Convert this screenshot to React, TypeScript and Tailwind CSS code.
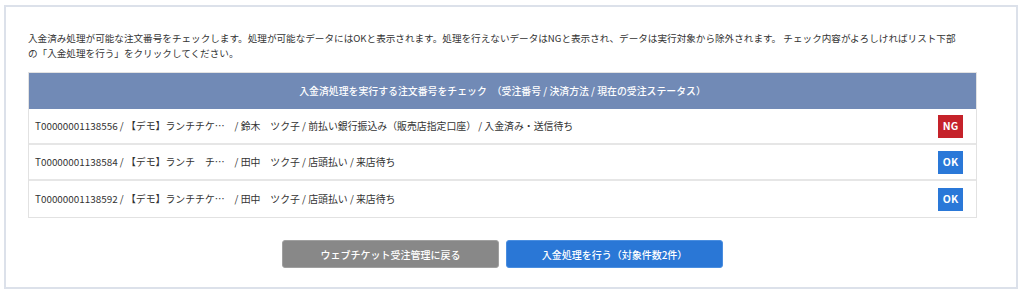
const rows = [
  {
    text: "T00000001138556 / 【デモ】ランチチケ…　/ 鈴木　ツク子 / 前払い銀行振込み（販売店指定口座） / 入金済み・送信待ち",
    ok: false,
  },
  { text: "T00000001138584 / 【デモ】ランチ　チ…　/ 田中　ツク子 / 店頭払い / 来店待ち", ok: true },
  { text: "T00000001138592 / 【デモ】ランチチケ…　/ 田中　ツク子 / 店頭払い / 来店待ち", ok: true },
];

function Badge({ ok }: { ok: boolean }) {
  return (
    <span
      className={`flex h-[23px] w-[25px] items-center justify-center text-[10.5px] font-bold text-white ${
        ok ? "bg-[#2a78d8]" : "bg-[#c5222a]"
      }`}
    >
      {ok ? "OK" : "NG"}
    </span>
  );
}

export default function App() {
  return (
    <div
      className="h-[296px] w-[1024px] bg-white pl-[4px] pt-[5px] text-[#333]"
      style={{ fontFamily: '"Noto Sans CJK JP", "Noto Sans", sans-serif' }}
    >
      <div className="h-[284px] w-[1014px] border-2 border-[#dce1ea] pl-[22px] pt-[24px]">
        <p className="w-[932px] text-[9.6px] leading-[15px]">
          入金済み処理が可能な注文番号をチェックします。処理が可能なデータにはOKと表示されます。処理を行えないデータはNGと表示され、データは実行対象から除外されます。
          チェック内容がよろしければリスト下部の「入金処理を行う」をクリックしてください。
        </p>

        <div className="mt-[11px] w-[949px] border border-[#e2e2e2]">
          <div className="flex h-[36px] items-center justify-center bg-[#718ab6] text-[9.9px] font-medium text-white">
            入金済処理を実行する注文番号をチェック　（受注番号 / 決済方法 / 現在の受注ステータス）
          </div>
          {rows.map((r, i) => (
            <div
              key={r.text}
              className={`flex h-[36px] items-center justify-between pl-[6px] pr-[13px] text-[9.9px] ${
                i < rows.length - 1 ? "border-b-2 border-[#e6e6e6]" : ""
              }`}
            >
              <span>{r.text}</span>
              <Badge ok={r.ok} />
            </div>
          ))}
        </div>

        <div className="mt-[22px] flex w-[949px] justify-center gap-[7px]">
          <button
            type="button"
            className="h-[28px] w-[217px] rounded-[3px] border border-[#a0a0a0] bg-[#888888] text-[10px] font-medium text-white"
          >
            ウェブチケット受注管理に戻る
          </button>
          <button
            type="button"
            className="h-[28px] w-[217px] rounded-[3px] border border-[#4a8ee0] bg-[#2a77d6] text-[10px] font-medium text-white"
          >
            入金処理を行う（対象件数2件）
          </button>
        </div>
      </div>
    </div>
  );
}
